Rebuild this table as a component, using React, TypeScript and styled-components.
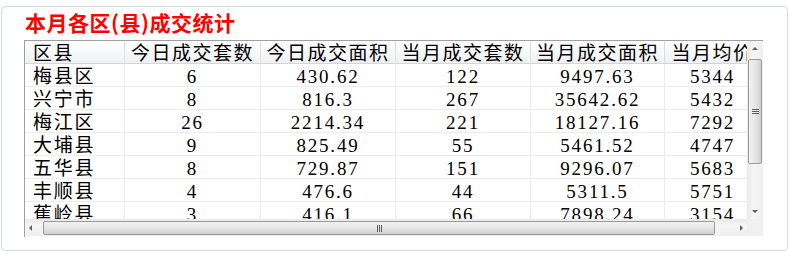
import React from "react";
import styled, { createGlobalStyle } from "styled-components";

const GlobalStyle = createGlobalStyle`
  body {
    margin: 0;
    background: #ffffff;
    font-family: "Liberation Serif", "Noto Sans CJK SC", serif;
  }
`;

const Card = styled.div`
  box-sizing: border-box;
  width: 787px;
  height: 245px;
  margin: 6px 0 3px 1px;
  border: 1px solid #d5dbe1;
  border-radius: 4px;
  background: #ffffff;
  overflow: hidden;
`;

const Title = styled.h2`
  margin: 0;
  padding: 5px 0 0 23px;
  font-family: "Noto Sans CJK SC", sans-serif;
  font-size: 21px;
  line-height: 21px;
  font-weight: 700;
  letter-spacing: 0.5px;
  color: #ff0000;
`;

const Frame = styled.div`
  box-sizing: border-box;
  width: 739px;
  height: 197px;
  margin: 7px 0 0 22px;
  border-top: 1px solid #a0a0a0;
  border-left: 1px solid #a0a0a0;
  display: grid;
  grid-template-columns: 722px 16px;
  grid-template-rows: 178px 17px;
`;

const Viewport = styled.div`
  overflow: hidden;
  background: #ffffff;
`;

const COLS = "100px 136px 135px 135px 134px 96px";

const HeaderRow = styled.div`
  display: grid;
  grid-template-columns: ${COLS};
  width: 736px;
  height: 23px;
  box-sizing: border-box;
  border-bottom: 1px solid #d5d5d5;
  background: linear-gradient(#ffffff, #f7f8f9 50%, #eef0f2);
`;

const HeadCell = styled.div<{ $left?: boolean }>`
  box-sizing: border-box;
  padding: 4px ${(p) => (p.$left ? "0 0 8px" : "0 0 0")};
  border-right: 1px solid #dcdcdc;
  box-shadow: inset -1px 0 0 #ffffff;
  text-align: ${(p) => (p.$left ? "left" : "center")};
  font-size: 19px;
  line-height: 18px;
  letter-spacing: 1.5px;
  color: #000000;
  white-space: nowrap;
  overflow: hidden;
`;

const Row = styled.div`
  display: grid;
  grid-template-columns: ${COLS};
  width: 736px;
  height: 23px;
  box-sizing: border-box;
  border-bottom: 1px solid #ececec;
`;

const Cell = styled.div<{ $left?: boolean }>`
  box-sizing: border-box;
  padding: 4px ${(p) => (p.$left ? "0 0 8px" : "0 0 0")};
  border-right: 1px solid #ececec;
  text-align: ${(p) => (p.$left ? "left" : "center")};
  font-size: 19px;
  line-height: 18px;
  letter-spacing: 1.8px;
  color: #000000;
  white-space: nowrap;
`;

const VScroll = styled.div`
  display: flex;
  flex-direction: column;
  background: linear-gradient(90deg, #e9e9e9, #f5f5f5 40%, #f0f0f0);
`;

const HScroll = styled.div`
  display: flex;
  align-items: stretch;
  background: linear-gradient(#e9e9e9, #f5f5f5 40%, #f0f0f0);
`;

const Corner = styled.div`
  background: #f0f0f0;
`;

const ArrowButton = styled.div<{ $dir: "up" | "down" | "left" | "right" }>`
  flex: 0 0 17px;
  display: flex;
  align-items: center;
  justify-content: center;
  &::after {
    content: "";
    width: 0;
    height: 0;
    border: 3px solid transparent;
    ${(p) =>
      p.$dir === "up"
        ? "border-bottom: 3px solid #606060; border-top: 0; margin-top: -2px;"
        : p.$dir === "down"
        ? "border-top: 3px solid #606060; border-bottom: 0; margin-top: 2px;"
        : p.$dir === "left"
        ? "border-right: 3px solid #606060; border-left: 0; margin-left: -6px;"
        : "border-left: 3px solid #606060; border-right: 0; margin-left: 6px;"}
  }
`;

const VThumb = styled.div`
  flex: 0 0 105px;
  margin: 1px 1px 0 1px;
  box-sizing: border-box;
  border: 1px solid #9a9a9a;
  border-radius: 2px;
  background: linear-gradient(90deg, #f2f2f2, #e6e6e6 50%, #d2d2d2);
  display: flex;
  align-items: center;
  justify-content: center;
`;

const HThumb = styled.div`
  flex: 0 0 672px;
  margin: 2px 0 1px 1px;
  box-sizing: border-box;
  border: 1px solid #9a9a9a;
  border-radius: 2px;
  background: linear-gradient(#f2f2f2, #e6e6e6 50%, #d0d0d0);
  display: flex;
  align-items: center;
  justify-content: center;
`;

const Track = styled.div`
  flex: 1;
`;

const Grip = styled.div<{ $vertical?: boolean }>`
  display: flex;
  flex-direction: ${(p) => (p.$vertical ? "column" : "row")};
  gap: 1px;
  span {
    display: block;
    width: ${(p) => (p.$vertical ? "7px" : "1px")};
    height: ${(p) => (p.$vertical ? "1px" : "7px")};
    background: #5f5f5f;
  }
`;

const headers = ["区县", "今日成交套数", "今日成交面积", "当月成交套数", "当月成交面积", "当月均价"];

const rows: string[][] = [
  ["梅县区", "6", "430.62", "122", "9497.63", "5344"],
  ["兴宁市", "8", "816.3", "267", "35642.62", "5432"],
  ["梅江区", "26", "2214.34", "221", "18127.16", "7292"],
  ["大埔县", "9", "825.49", "55", "5461.52", "4747"],
  ["五华县", "8", "729.87", "151", "9296.07", "5683"],
  ["丰顺县", "4", "476.6", "44", "5311.5", "5751"],
  ["蕉岭县", "3", "416.1", "66", "7898.24", "3154"],
];

export default function App() {
  return (
    <>
      <GlobalStyle />
      <Card>
        <Title>本月各区(县)成交统计</Title>
        <Frame>
          <Viewport>
            <HeaderRow>
              {headers.map((h, i) => (
                <HeadCell key={h} $left={i === 0}>
                  {h}
                </HeadCell>
              ))}
            </HeaderRow>
            {rows.map((r) => (
              <Row key={r[0]}>
                {r.map((v, i) => (
                  <Cell key={i} $left={i === 0}>
                    {v}
                  </Cell>
                ))}
              </Row>
            ))}
          </Viewport>
          <VScroll>
            <ArrowButton $dir="up" />
            <VThumb>
              <Grip $vertical>
                <span />
                <span />
                <span />
              </Grip>
            </VThumb>
            <Track />
            <ArrowButton $dir="down" />
          </VScroll>
          <HScroll>
            <ArrowButton $dir="left" />
            <HThumb>
              <Grip>
                <span />
                <span />
                <span />
              </Grip>
            </HThumb>
            <Track />
            <ArrowButton $dir="right" />
          </HScroll>
          <Corner />
        </Frame>
      </Card>
    </>
  );
}
